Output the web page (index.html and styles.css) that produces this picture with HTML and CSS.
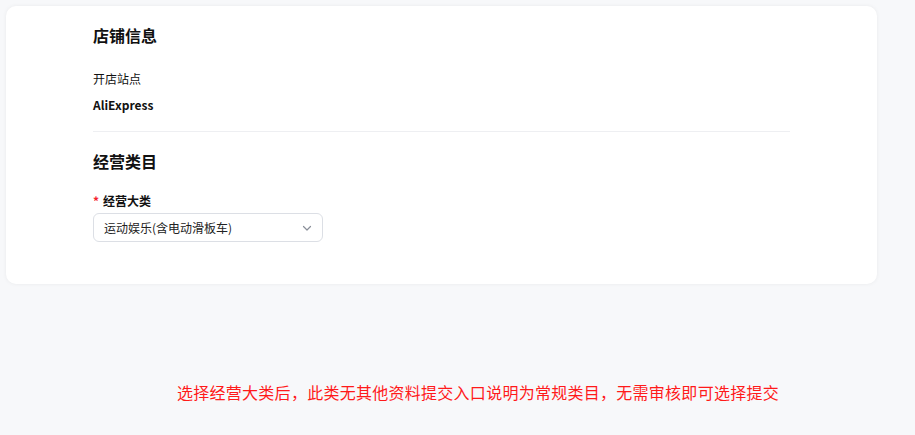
FILE: index.html
```html
<!DOCTYPE html>
<html>
    <head>
        <meta charset="utf-8">
        <title>店铺信息</title>
        <link rel="stylesheet" href="styles.css">
    </head>
    <body>
        <div class="card">
            <h2 class="title">店铺信息</h2>
            <div class="label">开店站点</div>
            <div class="value">AliExpress</div>

            <div class="divider"></div>

            <h2 class="title">经营类目</h2>
            <div class="field-label"><span class="req">*</span>经营大类</div>
            <div class="select">
                <span>运动娱乐(含电动滑板车)</span>
                <svg class="arrow" width="12" height="12" viewBox="0 0 12 12">
                    <path d="M2.5 4.5 L6 8 L9.5 4.5" fill="none" stroke="#8a8f99" stroke-width="1.2" stroke-linecap="round" stroke-linejoin="round"/>
                </svg>
            </div>
        </div>

        <p class="note">选择经营大类后，此类无其他资料提交入口说明为常规类目，无需审核即可选择提交</p>
    </body>
</html>
```

FILE: styles.css
```css
html {
  background: #f7f8fa;
}

body {
  margin: 0;
  padding: 6px 38px 0 6px;
  font-family: "Noto Sans CJK SC", "Noto Sans", sans-serif;
  color: #111;
}

.card {
  background: #fff;
  border-radius: 10px;
  box-shadow: 0 0 4px rgba(0, 0, 0, 0.06);
  padding: 18px 87px 44px 87px;
  height: 216px;
}

.title {
  font-size: 16px;
  font-weight: 700;
  line-height: 22px;
  margin: 0;
}

.label {
  font-size: 12px;
  line-height: 17px;
  margin-top: 24px;
}

.value {
  font-size: 12px;
  font-weight: 600;
  line-height: 18px;
  margin-top: 9px;
}

.divider {
  height: 1px;
  background: #eeeff2;
  margin: 17px 0 18px;
}

.field-label {
  font-size: 12px;
  font-weight: 700;
  line-height: 17px;
  margin-top: 20px;
}

.req {
  color: #f5222d;
  margin-right: 4px;
}

.select {
  display: flex;
  align-items: center;
  justify-content: space-between;
  box-sizing: border-box;
  width: 230px;
  height: 29px;
  margin-top: 4px;
  padding: 0 9px 0 10px;
  border: 1px solid #dcdfe5;
  border-radius: 6px;
  font-size: 12px;
  color: #222;
}

.note {
  margin: 97px 0 0;
  padding-left: 171px;
  font-size: 16px;
  letter-spacing: 0.27px;
  line-height: 22px;
  color: #ff1a1a;
}
```
